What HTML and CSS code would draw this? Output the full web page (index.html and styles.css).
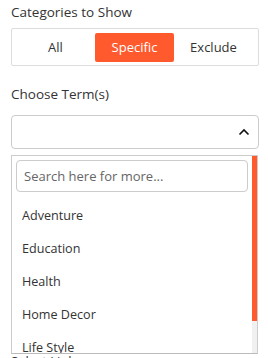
FILE: index.html
```html
<!DOCTYPE html>
<html>
<head>
<meta charset="utf-8">
<link rel="stylesheet" href="styles.css">
</head>
<body>
<div class="panel">
  <div class="label">Categories to Show</div>
  <div class="seg">
    <button class="seg-btn">All</button>
    <button class="seg-btn active">Specific</button>
    <button class="seg-btn">Exclude</button>
  </div>
  <div class="label label-terms">Choose Term(s)</div>
  <div class="select-wrap">
    <div class="select">
      <svg class="chev" width="12" height="8" viewBox="0 0 12 8"><path d="M1.5 6.5 L6 2 L10.5 6.5" fill="none" stroke="#111" stroke-width="1.6"/></svg>
    </div>
    <div class="dropdown">
      <div class="dd-inner">
        <div class="search">Search here for more...</div>
        <ul class="options">
          <li>Adventure</li>
          <li>Education</li>
          <li>Health</li>
          <li>Home Decor</li>
          <li>Life Style</li>
        </ul>
      </div>
      <div class="scrollbar"><div class="thumb"></div></div>
    </div>
  </div>
  <div class="under">Select Link</div>
</div>
</body>
</html>
```
FILE: styles.css
```css
html, body { margin: 0; padding: 0; background: #fff; }
body { font-family: "Open Sans", "Noto Sans", sans-serif; color: #333; font-size: 13px; overflow: hidden; height: 358px; }
.panel { padding: 3px 9px 0 11px; }
.label { font-size: 13.5px; line-height: 18px; color: #333; }
.seg { margin-top: 7px; border: 1px solid #ddd; border-radius: 2px; height: 38px; box-sizing: border-box; display: flex; align-items: center; padding: 0 5px 0 4px; }
.seg-btn { flex: 1; height: 29px; border: 0; background: transparent; font-family: inherit; font-size: 13px; color: #333; border-radius: 2px; padding: 0; }
.seg-btn.active { background: #ff5a2e; color: #fff; }
.label-terms { margin-top: 19px; }
.select-wrap { position: relative; margin-top: 12px; }
.select { height: 34px; box-sizing: border-box; border: 1px solid #ccc; border-radius: 4px; display: flex; align-items: center; justify-content: flex-end; padding-right: 8px; }
.chev { display: block; }
.dropdown { position: absolute; left: 0; right: 1px; top: 40px; height: 199px; border: 1px solid #ccc; border-bottom-color: #bbb; background: #fff; display: flex; box-sizing: border-box; z-index: 2; overflow: hidden; }
.dd-inner { flex: 1; padding: 4px 4px 0 4px; }
.search { height: 32px; box-sizing: border-box; border: 1px solid #ccc; border-radius: 4px; padding-left: 7px; line-height: 30px; font-size: 13px; color: #666; }
.options { list-style: none; margin: 0; padding: 7px 0 0 6px; }
.options li { height: 33px; line-height: 33px; font-size: 12.6px; color: #333; }
.scrollbar { width: 5px; background: #f0f0f0; display: flex; flex-direction: column; }
.thumb { height: 165px; background: #ff5a2e; }
.under { margin-top: 205px; font-size: 13px; line-height: 14px; }
```
